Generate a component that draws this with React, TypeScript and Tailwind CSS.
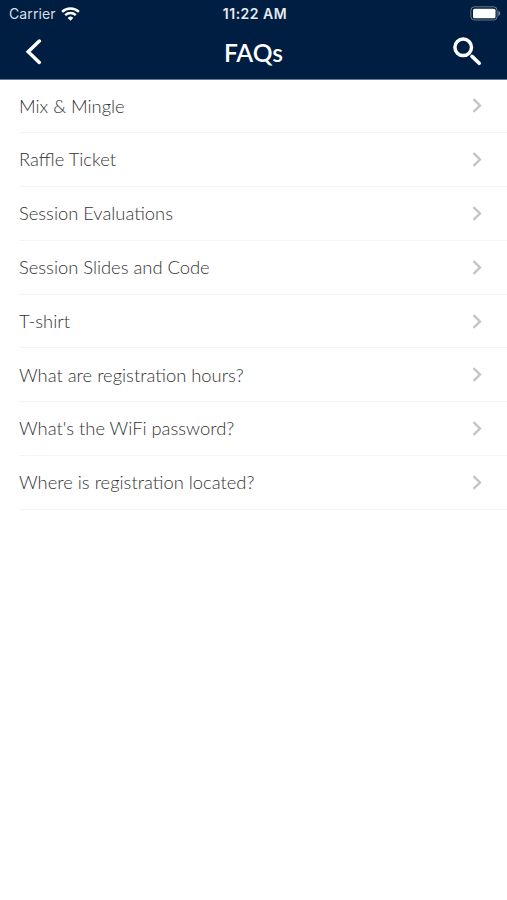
const faqs = [
  'Mix & Mingle',
  'Raffle Ticket',
  'Session Evaluations',
  'Session Slides and Code',
  'T-shirt',
  'What are registration hours?',
  "What's the WiFi password?",
  'Where is registration located?',
]

function StatusBar() {
  return (
    <div className="grid h-[27px] grid-cols-3 items-center pl-[9px] pr-[6px] font-['Inter',sans-serif] text-[14px] leading-none">
      <div className="flex items-center gap-[5px]">
        <span className="pt-px tracking-[0.1px] text-[#d9dfe8]">Carrier</span>
        <svg width="19" height="14" viewBox="0 0 19 14" fill="none" stroke="currentColor" strokeWidth="2.4">
          <path d="M1.1 4.9a12 12 0 0 1 16.8 0" />
          <path d="M4.2 8.2a7.6 7.6 0 0 1 10.6 0" />
          <path d="M9.5 13.8 6.7 10.9a4 4 0 0 1 5.6 0Z" fill="currentColor" stroke="none" />
        </svg>
      </div>
      <span className="pt-px text-center font-semibold tracking-[0.5px] text-[#e6eaf0]">11:22 AM</span>
      <svg className="justify-self-end" width="31" height="15" viewBox="0 0 31 15" fill="none">
        <rect x="0.9" y="0.8" width="26.2" height="13.2" rx="3.5" stroke="white" strokeOpacity="0.4" />
        <rect x="3" y="2.8" width="22.5" height="9.4" rx="1.5" fill="white" />
        <path d="M28.3 4.8c2.6 1 2.6 4.2 0 5.2Z" fill="white" fillOpacity="0.45" />
      </svg>
    </div>
  )
}

export default function App() {
  return (
    <div className="h-[900px] w-[507px] overflow-hidden bg-white font-['Lato',sans-serif]">
      <header className="h-[79.5px] border-b border-[#5d7d95] bg-[#001e41] text-white">
        <StatusBar />
        <div className="flex h-[50px] items-center justify-between pl-[25px] pr-[25px]">
          <svg width="30" height="26" viewBox="0 0 30 26" fill="none" stroke="currentColor" strokeWidth="3.5" strokeLinecap="round">
            <path d="M14.3 2 3.2 12.7l11.1 10.7" />
          </svg>
          <h1 className="pt-[3px] text-[24.6px] font-semibold">FAQs</h1>
          <svg width="30" height="30" viewBox="0 0 30 30" fill="none" stroke="currentColor">
            <circle cx="11.2" cy="10.3" r="8.3" strokeWidth="3.5" />
            <path d="m20 19.4 7.2 6.9" strokeWidth="3.6" strokeLinecap="round" />
          </svg>
        </div>
      </header>

      <ul>
        {faqs.map((faq) => (
          <li key={faq} className="ml-[19px] flex h-[53.8px] items-center justify-between border-b border-[#f4f4f4] pr-[25px] pt-px">
            <span className="text-[18.35px] font-light text-[#333]">{faq}</span>
            <svg width="10" height="16" viewBox="0 0 10 16" fill="none" stroke="#c3c3c5" strokeWidth="2.3">
              <path d="m1.5 1.2 6.5 6.3-6.5 6.3" />
            </svg>
          </li>
        ))}
      </ul>
    </div>
  )
}
